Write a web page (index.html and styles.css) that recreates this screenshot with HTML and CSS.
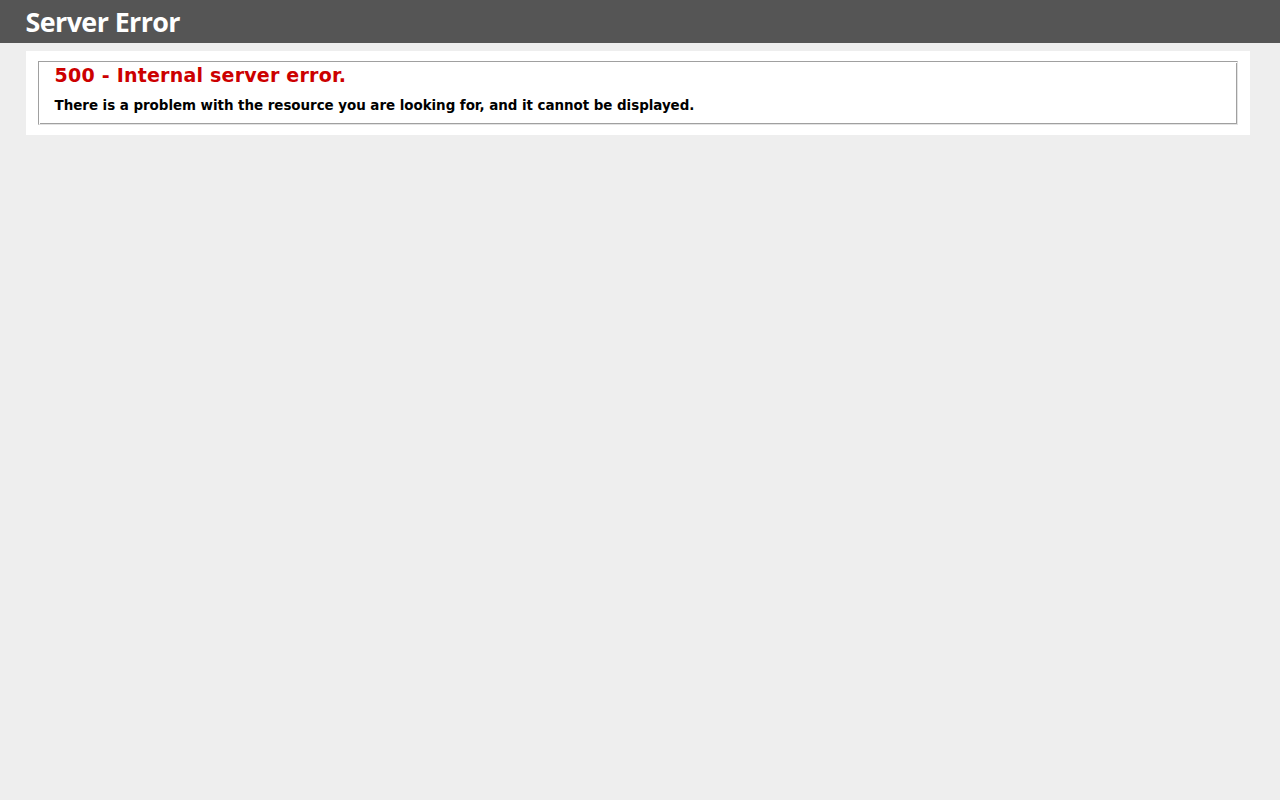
FILE: index.html
```html
<!DOCTYPE html>
<html>
<head>
<meta charset="utf-8">
<title>500 - Internal server error.</title>
<link rel="stylesheet" href="styles.css">
</head>
<body>
<div class="header"><h1>Server Error</h1></div>
<div class="content">
  <div class="content-container">
    <fieldset>
      <h2>500 - Internal server error.</h2>
      <h3>There is a problem with the resource you are looking for, and it cannot be displayed.</h3>
    </fieldset>
  </div>
</div>
</body>
</html>
```

FILE: styles.css
```css
body {
  margin: 0;
  font-size: 11.2px;
  font-family: "DejaVu Sans", Verdana, sans-serif;
  background: #eeeeee;
}
fieldset {
  margin: 0 2px;
  padding: 1px 16px 10px 16px;
  border: 1px solid;
  border-color: #a0a0a0 #e3e3e3 #e3e3e3 #a0a0a0;
  box-shadow: inset 1px 1px 0 #ffffff, inset -1px -1px 0 #a0a0a0;
}
h1 {
  font-size: 26.88px;
  line-height: 31px;
  letter-spacing: -0.6px;
  margin: 0;
  color: #ffffff;
}
h2 {
  font-size: 19.04px;
  line-height: 24px;
  letter-spacing: 0.2px;
  margin: 0;
  color: #cc0000;
}
h3 {
  font-size: 13.44px;
  line-height: 16px;
  letter-spacing: -0.04px;
  margin: 11px 0 0 0;
  color: #000000;
}
.header {
  padding: 6px 2%;
  font-family: "Open Sans", "DejaVu Sans", sans-serif;
  color: #ffffff;
  background-color: #555555;
}
.content {
  margin: 0 0 0 2%;
}
.content-container {
  background: #ffffff;
  width: 96%;
  margin-top: 8px;
  padding: 10px;
}
```
